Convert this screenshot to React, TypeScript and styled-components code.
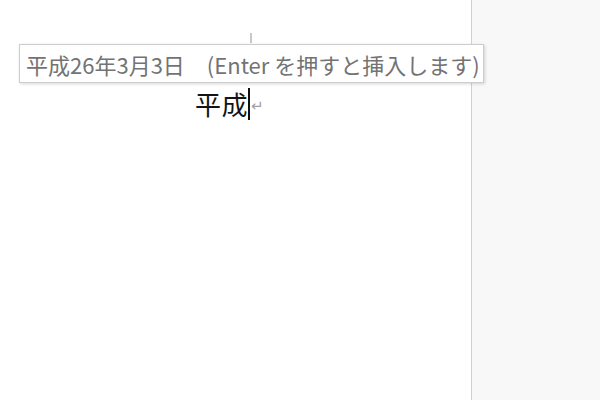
import React from 'react';
import styled, { createGlobalStyle } from 'styled-components';

const GlobalStyle = createGlobalStyle`
  html, body {
    margin: 0;
    padding: 0;
    background: #f8f8f8;
  }
`;

const Screen = styled.div`
  display: flex;
  width: 600px;
  height: 400px;
  overflow: hidden;
  font-family: 'Noto Sans CJK JP', 'Noto Sans', sans-serif;
`;

const Page = styled.div`
  position: relative;
  width: 471px;
  flex: none;
  background: #ffffff;
  border-right: 1px solid #d2d2d2;
  padding-top: 33px;
  box-sizing: content-box;
`;

const Desk = styled.div`
  flex: 1;
  background: #f8f8f8;
`;

const MarginMark = styled.div`
  width: 2px;
  height: 10px;
  margin-left: 250px;
  background: #c8c8c8;
`;

const Line = styled.div`
  display: flex;
  align-items: center;
  margin-top: 45px;
  padding-left: 195px;
  height: 32px;
`;

const Typed = styled.span`
  font-size: 26px;
  line-height: 32px;
  color: #141414;
  letter-spacing: 0.5px;
`;

const Caret = styled.span`
  display: inline-block;
  width: 2px;
  height: 32px;
  background: #111;
`;

const ParaMark = styled.span`
  font-family: 'DejaVu Sans', sans-serif;
  font-size: 15px;
  line-height: 15px;
  color: #a0a0a0;
  margin-left: 1px;
  margin-top: 4px;
`;

const Tip = styled.div`
  position: absolute;
  left: 19px;
  top: 44px;
  width: 465px;
  height: 39px;
  box-sizing: border-box;
  padding-left: 6px;
  display: flex;
  align-items: center;
  background: #fff;
  border: 1px solid #cdcdcd;
  box-shadow: 1px 1px 3px rgba(0, 0, 0, 0.16);
  color: #737373;
  font-size: 22px;
  white-space: nowrap;
`;

export default function App() {
  return (
    <>
      <GlobalStyle />
      <Screen>
        <Page>
          <MarginMark />
          <Line>
            <Typed>平成</Typed>
            <Caret />
            <ParaMark>↵</ParaMark>
          </Line>
          <Tip>平成26年3月3日　(Enter を押すと挿入します)</Tip>
        </Page>
        <Desk />
      </Screen>
    </>
  );
}
